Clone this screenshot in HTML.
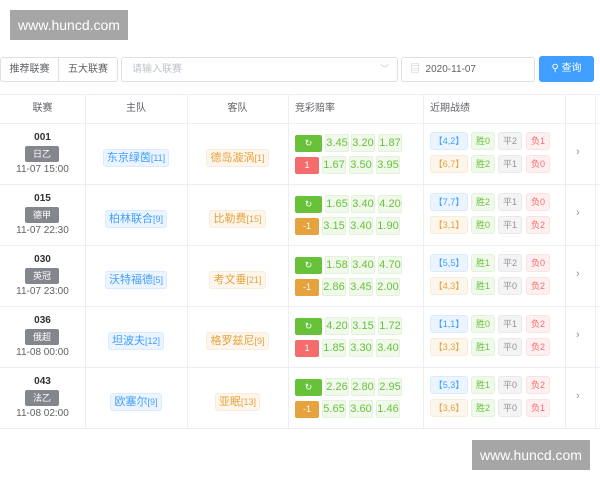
<!DOCTYPE html>
<html><head><meta charset="utf-8"><style>
*{margin:0;padding:0;box-sizing:border-box}
body{width:600px;height:480px;background:#fff;font-family:"Liberation Sans","Noto Sans CJK SC",sans-serif;font-size:10px;color:#606266;position:relative;overflow:hidden}
.a{position:absolute}
.wm{background:#a6a6a6;color:#fff;font-size:14px;text-align:center;line-height:30px;width:118px;height:30px}
.btn{border:1px solid #dcdfe6;height:25px;line-height:23px;text-align:center;color:#606266;background:#fff}
.hl{border-bottom:1px solid #ebeef5}
.vl{border-left:1px solid #ebeef5}
.th{top:95px;height:28px;line-height:28px;color:#606266;font-size:10px}
.tag{height:18px;line-height:16px;border:1px solid;border-radius:3px;padding:0 3px;font-size:11px;white-space:nowrap}
.hm{background:#ecf5ff;border-color:#d9ecff;color:#409eff}
.aw{background:#fdf6ec;border-color:#faecd8;color:#e6a23c}
.sm{font-size:9px}
.ob{height:18px;line-height:16px;border:1px solid #e1f3d8;background:#f0f9eb;color:#67c23a;border-radius:2px;text-align:center;font-size:11px;width:24px}
.hd{height:17px;line-height:17px;border-radius:2px;text-align:center;color:#fff;font-size:9px}
.rc{height:18px;line-height:16px;border:1px solid;border-radius:3px;text-align:center;font-size:9px}
.b1{background:#ecf5ff;border-color:#d9ecff;color:#409eff;width:38px}
.b2{background:#fdf6ec;border-color:#faecd8;color:#e6a23c;width:38px}
.w{background:#f0f9eb;border-color:#e1f3d8;color:#67c23a;width:24px}
.d{background:#f4f4f5;border-color:#e9e9eb;color:#909399;width:24px}
.l{background:#fef0f0;border-color:#fde2e2;color:#f56c6c;width:24px}
.lg{background:#83868d;color:#fff;width:34px;height:16px;line-height:16px;text-align:center;border-radius:2px;font-size:9px}
</style></head><body>
<div class="a wm" style="left:10px;top:10px">www.huncd.com</div>
<div class="a wm" style="left:472px;top:440px">www.huncd.com</div>

<div class="a btn" style="left:0;top:57px;width:59px;border-radius:3px 0 0 3px">推荐联赛</div>
<div class="a btn" style="left:58px;top:57px;width:60px;border-radius:0 3px 3px 0">五大联赛</div>
<div class="a btn" style="left:121px;top:57px;width:277px;border-radius:3px;text-align:left;padding-left:10px;color:#c0c4cc">请输入联赛<span class="a" style="right:8px;top:0;color:#c0c4cc;font-size:9px">﹀</span></div>
<div class="a btn" style="left:401px;top:57px;width:134px;border-radius:3px;text-align:left;padding-left:8px;color:#606266"><span style="color:#c0c4cc">▤</span>&nbsp; 2020-11-07</div>
<div class="a" style="left:539px;top:56px;width:55px;height:26px;line-height:26px;background:#409eff;color:#fff;border-radius:3px;text-align:center;font-size:10px">⚲ 查询</div>

<div class="a hl" style="left:0;top:94px;width:600px;border-top:1px solid #ebeef5;height:30px"></div>
<div class="a th" style="left:0;width:85px;text-align:center">联赛</div>
<div class="a th" style="left:85px;width:102px;text-align:center">主队</div>
<div class="a th" style="left:187px;width:101px;text-align:center">客队</div>
<div class="a th" style="left:295px">竞彩赔率</div>
<div class="a th" style="left:430px">近期战绩</div>
<div class="a vl" style="left:85px;top:95px;height:334px"></div>
<div class="a vl" style="left:187px;top:95px;height:334px"></div>
<div class="a vl" style="left:288px;top:95px;height:334px"></div>
<div class="a vl" style="left:423px;top:95px;height:334px"></div>
<div class="a vl" style="left:565px;top:95px;height:334px"></div>
<div class="a vl" style="left:595px;top:95px;height:334px"></div>

<div id="rows"></div>
<script>
var D=[
["001","日乙","11-07 15:00","东京绿茵","11","德岛漩涡","1",["3.45","3.20","1.87"],["1","#f56c6c"],["1.67","3.50","3.95"],["4,2","0","2","1"],["6,7","2","1","0"]],
["015","德甲","11-07 22:30","柏林联合","9","比勒费","15",["1.65","3.40","4.20"],["-1","#e6a23c"],["3.15","3.40","1.90"],["7,7","2","1","0"],["3,1","0","1","2"]],
["030","英冠","11-07 23:00","沃特福德","5","考文垂","21",["1.58","3.40","4.70"],["-1","#e6a23c"],["2.86","3.45","2.00"],["5,5","1","2","0"],["4,3","1","0","2"]],
["036","俄超","11-08 00:00","坦波夫","12","格罗兹尼","9",["4.20","3.15","1.72"],["1","#f56c6c"],["1.85","3.30","3.40"],["1,1","0","1","2"],["3,3","1","0","2"]],
["043","法乙","11-08 02:00","欧塞尔","9","亚眠","13",["2.26","2.80","2.95"],["-1","#e6a23c"],["5.65","3.60","1.46"],["5,3","1","0","2"],["3,6","2","0","1"]]];
var h="";
D.forEach(function(r,i){var T=124+61*i;
h+='<div class="a hl" style="left:0;top:'+T+'px;width:600px;height:61px"></div>';
h+='<div class="a" style="left:0;width:85px;top:'+(T+8)+'px;text-align:center;font-weight:bold;color:#303133;font-size:10px">'+r[0]+'</div>';
h+='<div class="a lg" style="left:25px;top:'+(T+22)+'px">'+r[1]+'</div>';
h+='<div class="a" style="left:0;width:85px;top:'+(T+40)+'px;text-align:center;font-size:10px">'+r[2]+'</div>';
h+='<div class="a" style="left:85px;width:102px;top:'+(T+25)+'px;display:flex;justify-content:center"><span class="tag hm">'+r[3]+'<span class="sm">['+r[4]+']</span></span></div>';
h+='<div class="a" style="left:187px;width:101px;top:'+(T+25)+'px;display:flex;justify-content:center"><span class="tag aw">'+r[5]+'<span class="sm">['+r[6]+']</span></span></div>';
h+='<div class="a hd" style="left:295px;top:'+(T+11)+'px;width:27px;background:#67c23a">↻</div>';
var xs=[325,351,378];
r[7].forEach(function(v,k){h+='<div class="a ob" style="left:'+xs[k]+'px;top:'+(T+10)+'px">'+v+'</div>';});
h+='<div class="a hd" style="left:295px;top:'+(T+33)+'px;width:24px;background:'+r[8][1]+'">'+r[8][0]+'</div>';
var xs2=[322,349,376];
r[9].forEach(function(v,k){h+='<div class="a ob" style="left:'+xs2[k]+'px;top:'+(T+32)+'px">'+v+'</div>';});
[r[10],r[11]].forEach(function(q,j){var y=T+8+j*23;
h+='<div class="a rc '+(j?'b2':'b1')+'" style="left:430px;top:'+y+'px">【'+q[0]+'】</div>';
h+='<div class="a rc w" style="left:471px;top:'+y+'px">胜'+q[1]+'</div>';
h+='<div class="a rc d" style="left:498px;top:'+y+'px">平'+q[2]+'</div>';
h+='<div class="a rc l" style="left:526px;top:'+y+'px">负'+q[3]+'</div>';});
h+='<div class="a" style="left:576px;top:'+(T+22)+'px;color:#909399;font-size:11px">›</div>';
});
document.getElementById("rows").innerHTML=h;
</script>
</body></html>
